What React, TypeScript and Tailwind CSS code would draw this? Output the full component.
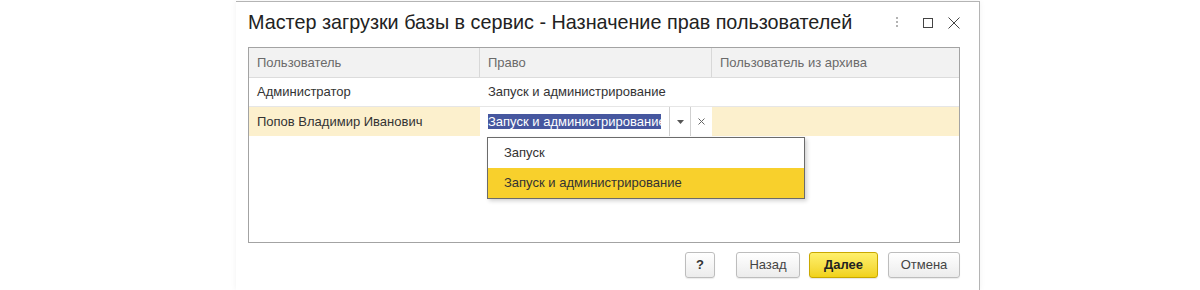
import React from "react";

export default function App() {
  const font = { fontFamily: '"Liberation Sans", Arial, sans-serif' };
  return (
    <div className="w-[1200px] h-[290px] bg-white overflow-hidden pl-[236px] pt-[1px]" style={font}>
      <div className="relative w-[744px] h-[289px] border-t border-r border-[#b4b4b4] bg-white pl-[12px] pr-[18px] shadow-[0_0_6px_rgba(0,0,0,0.06)]">
        {/* title bar */}
        <div className="flex items-start h-[45px] pt-[11px] w-[712px]">
          <div className="text-[19.8px] text-[#222] leading-none flex-1 whitespace-nowrap">
            Мастер загрузки базы в сервис - Назначение прав пользователей
          </div>
          <div className="flex items-center h-[20px]">
            <svg width="4" height="14" viewBox="0 0 4 14">
              <circle cx="2" cy="2" r="1" fill="#9a9a9a" />
              <circle cx="2" cy="6" r="1" fill="#9a9a9a" />
              <circle cx="2" cy="10" r="1" fill="#9a9a9a" />
            </svg>
            <div className="ml-[24px] w-[10px] h-[10px] border border-[#444]" />
            <svg className="ml-[15px]" width="12" height="12" viewBox="0 0 12 12">
              <path d="M0.5 0.5 L11.5 11.5 M11.5 0.5 L0.5 11.5" stroke="#444" strokeWidth="1" />
            </svg>
          </div>
        </div>

        {/* table */}
        <div className="relative w-[712px] h-[196px] border border-[#a3a3a3] bg-white text-[13px]">
          <div className="flex h-[30px] bg-[#f2f2f2] border-b border-[#dcdcdc] text-[#6a6a6a]">
            <div className="w-[231px] border-r border-[#d8d8d8] flex items-center pl-[8px]">Пользователь</div>
            <div className="w-[232px] border-r border-[#d8d8d8] flex items-center pl-[8px]">Право</div>
            <div className="flex-1 flex items-center pl-[8px]">Пользователь из архива</div>
          </div>
          <div className="flex h-[29px] border-b border-[#e6e6e6] text-[#333]">
            <div className="w-[231px] flex items-center pl-[8px]">Администратор</div>
            <div className="w-[232px] flex items-center pl-[8px]">Запуск и администрирование</div>
            <div className="flex-1" />
          </div>
          <div className="flex h-[29px] text-[#333]">
            <div className="w-[231px] flex items-center pl-[8px] bg-[#fcf0cd]">Попов Владимир Иванович</div>
            <div className="w-[232px] flex items-center bg-white">
              <div className="w-[173px] shrink-0 ml-[8px] overflow-hidden whitespace-nowrap">
                <span className="bg-[#46579f] text-white">Запуск и администрирование</span>
              </div>
              <div className="ml-[8px] w-[22px] shrink-0 h-full border-l border-r border-[#d0d0d0] flex items-center justify-center">
                <svg width="7" height="4" viewBox="0 0 7 4">
                  <path d="M0 0 L7 0 L3.5 4 Z" fill="#555" />
                </svg>
              </div>
              <div className="w-[20px] shrink-0 flex items-center justify-center">
                <svg width="7" height="7" viewBox="0 0 7 7">
                  <path d="M0.5 0.5 L6.5 6.5 M6.5 0.5 L0.5 6.5" stroke="#666" strokeWidth="1" />
                </svg>
              </div>
            </div>
            <div className="flex-1 bg-[#fcf0cd]" />
          </div>

          {/* dropdown */}
          <div className="absolute left-[238px] top-[89px] w-[318px] h-[62px] border border-[#6b6b6b] bg-white shadow-[2px_2px_4px_rgba(0,0,0,0.18)] text-[13px] text-[#333]">
            <div className="h-[30px] flex items-center pl-[16px]">Запуск</div>
            <div className="h-[30px] flex items-center pl-[16px] bg-[#f8d02c]">Запуск и администрирование</div>
          </div>
        </div>

        {/* buttons */}
        <div className="flex justify-end items-center mt-[9px] w-[712px] text-[13px]">
          <button className="w-[30px] h-[26px] rounded-[3px] border border-[#bdbdbd] bg-gradient-to-b from-white to-[#ececec] text-[#333] font-bold shadow-[0_1px_1px_rgba(0,0,0,0.08)]">?</button>
          <button className="ml-[21px] w-[64px] h-[26px] rounded-[3px] border border-[#bdbdbd] bg-gradient-to-b from-white to-[#ececec] text-[#444] shadow-[0_1px_1px_rgba(0,0,0,0.08)]">Назад</button>
          <button className="ml-[9px] w-[69px] h-[26px] rounded-[3px] border border-[#c9a800] bg-gradient-to-b from-[#fff06a] to-[#f1d215] text-[#222] font-bold shadow-[0_1px_1px_rgba(0,0,0,0.1)]">Далее</button>
          <button className="ml-[10px] w-[72px] h-[26px] rounded-[3px] border border-[#bdbdbd] bg-gradient-to-b from-white to-[#ececec] text-[#444] shadow-[0_1px_1px_rgba(0,0,0,0.08)]">Отмена</button>
        </div>
      </div>
    </div>
  );
}
